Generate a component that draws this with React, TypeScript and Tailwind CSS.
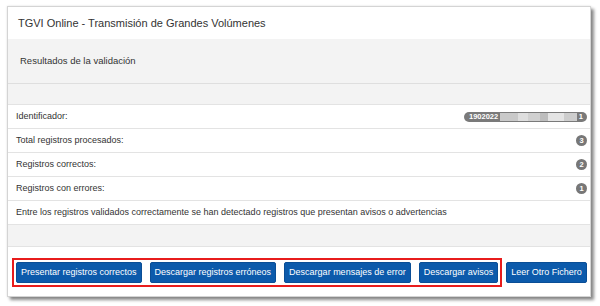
const rows = [
  { label: 'Total registros procesados:', count: '3' },
  { label: 'Registros correctos:', count: '2' },
  { label: 'Registros con errores:', count: '1' },
];

const marked = ['Presentar registros correctos', 'Descargar registros erróneos', 'Descargar mensajes de error', 'Descargar avisos'];

function Btn({ label }: { label: string }) {
  return (
    <button className="h-[21px] px-[4px] rounded-[2px] bg-[#0c5aab] border border-[#0a4e96] text-white text-[9px] leading-none whitespace-nowrap shrink-0">
      {label}
    </button>
  );
}

function Badge({ n }: { n: string }) {
  return (
    <span className="w-[11px] h-[11px] rounded-full bg-[#777] text-white text-[7.5px] font-bold flex items-center justify-center leading-none">
      {n}
    </span>
  );
}

export default function App() {
  return (
    <div className="w-[600px] h-[306px] bg-white pt-[6px] pl-[7px] font-['Liberation_Sans',Arial,sans-serif] text-[#333]">
      <div className="w-[584px] h-[291px] flex flex-col border border-[#d4d4d4] bg-white shadow-[0_0_2px_rgba(0,0,0,0.12),3px_3px_3px_rgba(0,0,0,0.45)]">
        {/* cabecera */}
        <div className="h-[32px] flex items-center px-[10px] text-[11px] text-[#333] shrink-0">
          TGVI Online - Transmisión de Grandes Volúmenes
        </div>
        <div className="h-[45px] flex items-center pl-[12px] bg-[#f3f3f3] border-b border-[#dedede] text-[9.5px] shrink-0">
          Resultados de la validación
        </div>
        <div className="h-[21px] bg-[#f3f3f3] border-b border-[#e3e3e3] shrink-0" />

        {/* lista */}
        <div className="h-[24px] flex items-center justify-between pl-[8px] pr-[3px] border-b border-[#e3e3e3] text-[9px] shrink-0">
          <span>Identificador:</span>
          <span className="h-[10px] w-[123px] rounded-full bg-[#7a7a7a] flex items-center pl-[5px] pr-[4px] text-white text-[7.5px] font-bold leading-none">
            <span>1902022</span>
            <span className="flex-1 flex items-center h-[8px] ml-[2px] mr-[2px]">
              <span className="h-full w-[18px] bg-[#c9c9c9]" />
              <span className="h-full w-[10px] bg-[#dedede]" />
              <span className="h-full w-[12px] bg-[#d0d0d0]" />
              <span className="h-full w-[8px] bg-[#bdbdbd]" />
              <span className="h-full w-[16px] bg-[#e4e4e4]" />
              <span className="h-full flex-1 bg-[#cdcdcd]" />
            </span>
            <span>1</span>
          </span>
        </div>
        {rows.map((r) => (
          <div key={r.label} className="h-[24px] flex items-center justify-between pl-[8px] pr-[3px] border-b border-[#e3e3e3] text-[9px] shrink-0">
            <span>{r.label}</span>
            <Badge n={r.count} />
          </div>
        ))}
        <div className="h-[24px] flex items-center pl-[8px] border-b border-[#e3e3e3] text-[9px] shrink-0">
          Entre los registros validados correctamente se han detectado registros que presentan avisos o advertencias
        </div>
        <div className="h-[22px] bg-[#f3f3f3] border-b border-[#e3e3e3] shrink-0" />

        {/* botones */}
        <div className="flex-1 flex items-start pt-[11px] pl-[4px] gap-[4px]">
          <div className="flex gap-[8px] p-[2px] border-2 border-[#e81c1c] shrink-0">
            {marked.map((m) => (
              <Btn key={m} label={m} />
            ))}
          </div>
          <div className="flex pt-[4px]">
            <Btn label="Leer Otro Fichero" />
          </div>
        </div>
      </div>
    </div>
  );
}
